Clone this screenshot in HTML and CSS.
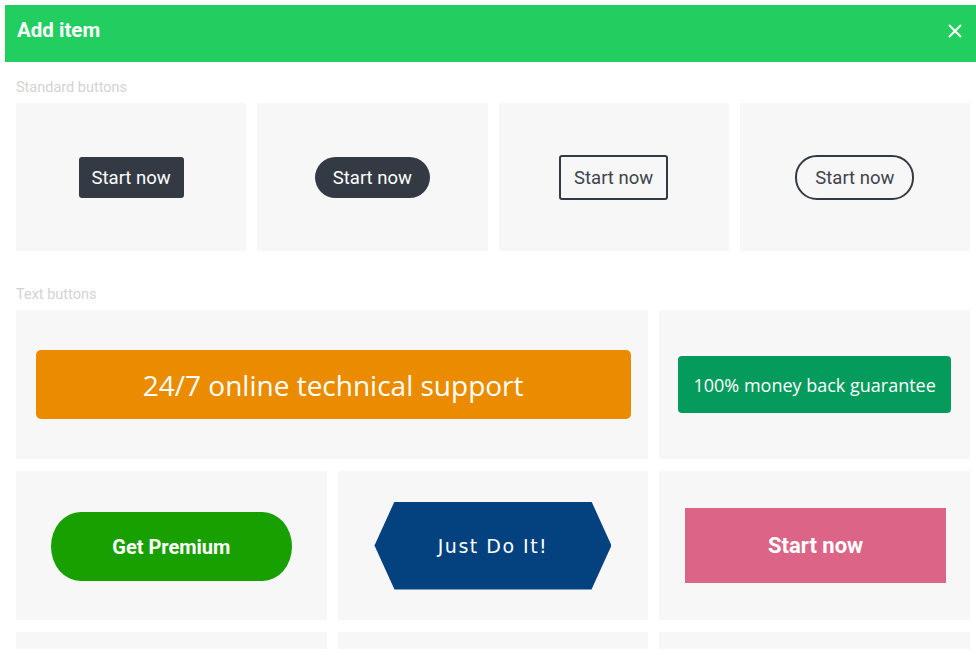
FILE: index.html
```html
<!DOCTYPE html>
<html>
<head>
<meta charset="utf-8">
<link rel="stylesheet" href="styles.css">
</head>
<body>
<div class="modal">
  <header class="modal-header">
    <h1 class="title">Add item</h1>
    <button class="close" aria-label="Close">
      <svg width="14" height="14" viewBox="0 0 14 14"><path d="M1 1L13 13M13 1L1 13" stroke="#fff" stroke-width="2" fill="none"/></svg>
    </button>
  </header>
  <div class="modal-body">
    <div class="section-label">Standard buttons</div>
    <div class="grid-4">
      <div class="card"><span class="btn-std btn-dark">Start now</span></div>
      <div class="card"><span class="btn-std btn-dark btn-pill">Start now</span></div>
      <div class="card"><span class="btn-std btn-outline">Start now</span></div>
      <div class="card"><span class="btn-std btn-outline btn-pill">Start now</span></div>
    </div>
    <div class="section-label label-second">Text buttons</div>
    <div class="grid-3">
      <div class="card card-wide"><span class="btn-orange">24/7 online technical support</span></div>
      <div class="card"><span class="btn-money">100% money back guarantee</span></div>
      <div class="card"><span class="btn-premium">Get Premium</span></div>
      <div class="card"><span class="btn-hex">Just Do It!</span></div>
      <div class="card"><span class="btn-pink">Start now</span></div>
      <div class="card"></div>
      <div class="card"></div>
      <div class="card"></div>
    </div>
  </div>
</div>
</body>
</html>
```

FILE: styles.css
```css
* { box-sizing: border-box; }
html, body { margin: 0; padding: 0; background: #fff; }
body { font-family: Roboto, "Liberation Sans", sans-serif; overflow: hidden; }

.modal {
  margin: 5px 0 0 5px;
  width: 971px;
}

.modal-header {
  height: 57px;
  background: #22ce5f;
  display: flex;
  align-items: center;
  justify-content: space-between;
  padding: 0 14px 0 12px;
}
.title {
  margin: 0;
  color: #fff;
  font-size: 20.5px;
  font-weight: 700;
  line-height: 1;
  position: relative;
  top: -3px;
}
.close {
  background: none;
  border: 0;
  padding: 0;
  width: 14px;
  height: 14px;
  display: flex;
  position: relative;
  top: -3px;
}

.modal-body {
  height: 587px;
  overflow: hidden;
  padding: 0 6px 0 11px;
}

.section-label {
  font-size: 14.5px;
  line-height: 16px;
  color: #d3d3d3;
  padding-top: 18px;
  margin-bottom: 7px;
}
.label-second { padding-top: 36px; }

.grid-4 {
  display: grid;
  grid-template-columns: repeat(4, 1fr);
  grid-auto-rows: 148px;
  column-gap: 11px;
}
.grid-3 {
  display: grid;
  grid-template-columns: repeat(3, 1fr);
  grid-auto-rows: 149px;
  gap: 12px 11px;
}

.card {
  background: #f7f7f7;
  display: flex;
  align-items: center;
  justify-content: center;
}
.card-wide { grid-column: span 2; }

.btn-std {
  display: inline-flex;
  align-items: center;
  justify-content: center;
  height: 41px;
  padding: 1px 13px 0;
  font-size: 18.5px;
  border-radius: 3px;
  white-space: nowrap;
  margin-top: 1px;
}
.btn-dark { background: #343a44; color: #fff; }
.btn-pill { border-radius: 22px; padding: 1px 18px 0; }
.btn-outline {
  background: transparent;
  color: #3e434b;
  border: 2px solid #343a44;
  height: 45px;
}

.btn-orange {
  width: 595px;
  height: 69px;
  margin-left: 2px;
  background: #eb8c00;
  border-radius: 5px;
  color: #fff;
  font-family: "Open Sans", Lato, sans-serif;
  font-size: 28px;
  display: flex;
  align-items: center;
  justify-content: center;
}
.btn-money {
  width: 273px;
  height: 57px;
  background: #049b5d;
  border-radius: 4px;
  color: #fff;
  font-family: "Open Sans", Lato, sans-serif;
  font-size: 18px;
  display: flex;
  align-items: center;
  justify-content: center;
}
.btn-premium {
  width: 241px;
  height: 69px;
  background: #17a000;
  border-radius: 30px / 35px;
  color: #fff;
  font-family: Roboto, sans-serif;
  font-weight: 700;
  font-size: 20px;
  display: flex;
  align-items: center;
  justify-content: center;
  margin-top: 2px;
}
.btn-hex {
  width: 237px;
  height: 88px;
  background: #03427f;
  clip-path: polygon(0 50%, 20px 0, calc(100% - 20px) 0, 100% 50%, calc(100% - 20px) 100%, 20px 100%);
  color: #fff;
  font-family: "DejaVu Sans", sans-serif;
  font-size: 19px;
  letter-spacing: 1.5px;
  display: flex;
  align-items: center;
  justify-content: center;
}
.btn-pink {
  width: 261px;
  height: 75px;
  background: #db6487;
  color: #fff;
  font-family: Roboto, sans-serif;
  font-weight: 700;
  font-size: 22px;
  display: flex;
  align-items: center;
  justify-content: center;
  margin-left: 2px;
}
```
